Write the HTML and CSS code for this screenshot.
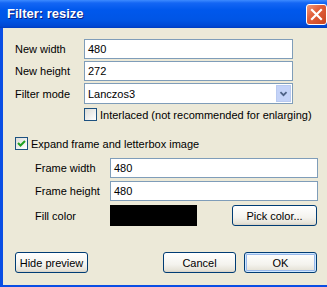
FILE: index.html
```html
<!DOCTYPE html>
<html>
    <head>
        <meta name="viewport" content="width=device-width, initial-scale=1">
        <link rel="stylesheet" href="styles.css">
    </head>
    <body>
        <div class="window">
            <!-- Title bar -->
            <div class="titlebar">
                <span class="title">Filter: resize</span>
                <span class="close">
                    <svg width="19" height="19" viewBox="0 0 19 19"><path d="M5 5 L14 14 M14 5 L5 14" stroke="#fff" stroke-width="2.2" stroke-linecap="square"/></svg>
                </span>
            </div>

            <div class="client">
                <!-- Size -->
                <div class="row">
                    <span class="lbl">New width</span>
                    <div class="edit">480</div>
                </div>
                <div class="row">
                    <span class="lbl">New height</span>
                    <div class="edit">272</div>
                </div>
                <div class="row select-row">
                    <span class="lbl">Filter mode</span>
                    <div class="edit select">
                        <span>Lanczos3</span>
                        <span class="drop">
                            <svg width="15" height="17" viewBox="0 0 15 17"><path d="M4 7 L7.5 10.5 L11 7" stroke="#4d6185" stroke-width="2" fill="none"/></svg>
                        </span>
                    </div>
                </div>
                <div class="check-row interlaced">
                    <span class="check"></span>
                    <span>Interlaced (not recommended for enlarging)</span>
                </div>

                <!-- Letterbox -->
                <div class="check-row expand">
                    <span class="check">
                        <svg width="11" height="11" viewBox="0 0 11 11"><path d="M2 5 L4.5 7.5 L9 3" stroke="#21a121" stroke-width="2" fill="none"/></svg>
                    </span>
                    <span>Expand frame and letterbox image</span>
                </div>
                <div class="frame-group">
                    <div class="row frame-row">
                        <span class="lbl">Frame width</span>
                        <div class="edit">480</div>
                    </div>
                    <div class="row frame-row">
                        <span class="lbl">Frame height</span>
                        <div class="edit">480</div>
                    </div>
                    <div class="row fill-row">
                        <span class="lbl">Fill color</span>
                        <div class="swatch"></div>
                        <button class="btn pick">Pick color...</button>
                    </div>
                </div>

                <!-- Buttons -->
                <div class="footer">
                    <button class="btn">Hide preview</button>
                    <div class="actions">
                        <button class="btn">Cancel</button>
                        <button class="btn default">OK</button>
                    </div>
                </div>
            </div>
        </div>
    </body>
</html>
```

FILE: styles.css
```css
body {
  margin: 0;
  overflow: hidden;
  font-family: "Liberation Sans", Arial, sans-serif;
  font-size: 11px;
  color: #000;
  background: #0a4ee4;
}

.window {
  width: 333px;
  height: 287px;
  display: flex;
  flex-direction: column;
  background: #0a4ee4;
}

.titlebar {
  height: 28px;
  display: flex;
  align-items: center;
  padding-left: 7px;
  background: linear-gradient(to bottom, #3d8bff 0px, #1466f4 3px, #0058ec 10px, #0055e5 20px, #0048d4 26px, #003cc0 28px);
}

.title {
  color: #fff;
  font-weight: bold;
  font-size: 13px;
  text-shadow: 1px 1px #0a1e80;
  padding-bottom: 1px;
}

.close {
  margin-left: auto;
  margin-right: 6px;
  width: 19px;
  height: 19px;
  border: 1px solid #fff;
  border-radius: 3px;
  background: linear-gradient(135deg, #f09a7c 0%, #e2603c 40%, #c84420 100%);
  display: flex;
}

.client {
  flex: 1;
  margin: 0 3px 2px 3px;
  padding: 11px 12px 0 12px;
  background: #ece9d8;
}

.row {
  display: flex;
  align-items: center;
  height: 20px;
  margin-bottom: 2px;
}

.lbl {
  width: 69px;
  flex-shrink: 0;
}

.edit {
  width: 209px;
  height: 20px;
  box-sizing: border-box;
  border: 1px solid #7f9db9;
  background: #fff;
  padding-left: 3px;
  display: flex;
  align-items: center;
}

.select-row {
  height: 21px;
  margin-bottom: 4px;
}

.select {
  height: 21px;
  padding-right: 1px;
}

.drop {
  margin-left: auto;
  width: 15px;
  height: 17px;
  box-sizing: border-box;
  border: 1px solid #b9caf0;
  background: #c4d3f8;
  display: flex;
  align-items: center;
  justify-content: center;
}

.drop svg {
  margin-top: -1px;
}

.check-row {
  display: flex;
  align-items: center;
  height: 13px;
  gap: 3px;
}

.check {
  width: 13px;
  height: 13px;
  box-sizing: border-box;
  border: 1px solid #1c5180;
  background: linear-gradient(135deg, #dcdcd7, #ffffff);
  display: flex;
  align-items: center;
  justify-content: center;
}

.interlaced {
  margin-left: 69px;
  margin-bottom: 16px;
}

.frame-group {
  margin-top: 8px;
  padding-left: 20px;
}

.frame-group .lbl {
  width: 75px;
}

.frame-row {
  margin-bottom: 3px;
}

.frame-row .edit {
  width: 208px;
}

.fill-row {
  height: 21px;
  margin-top: 4px;
  margin-bottom: 0;
}

.swatch {
  width: 87px;
  height: 21px;
  background: #000;
}

.btn {
  font-family: "Liberation Sans", Arial, sans-serif;
  font-size: 11px;
  color: #000;
  width: 73px;
  height: 21px;
  padding: 0;
  border: 1px solid #003c74;
  border-radius: 3px;
  background: linear-gradient(to bottom, #ffffff 0%, #f4f3ee 60%, #e6e3d8 90%, #d6d0c5 100%);
  cursor: pointer;
}

.pick {
  width: 85px;
  margin-left: auto;
  margin-right: 1px;
}

.default {
  box-shadow: inset 0 0 0 1px #cee7ff, inset 0 0 0 2px #98b8ea;
}

.footer {
  display: flex;
  margin-top: 26px;
  padding-right: 1px;
}

.actions {
  margin-left: auto;
  display: flex;
  gap: 8px;
}
```
